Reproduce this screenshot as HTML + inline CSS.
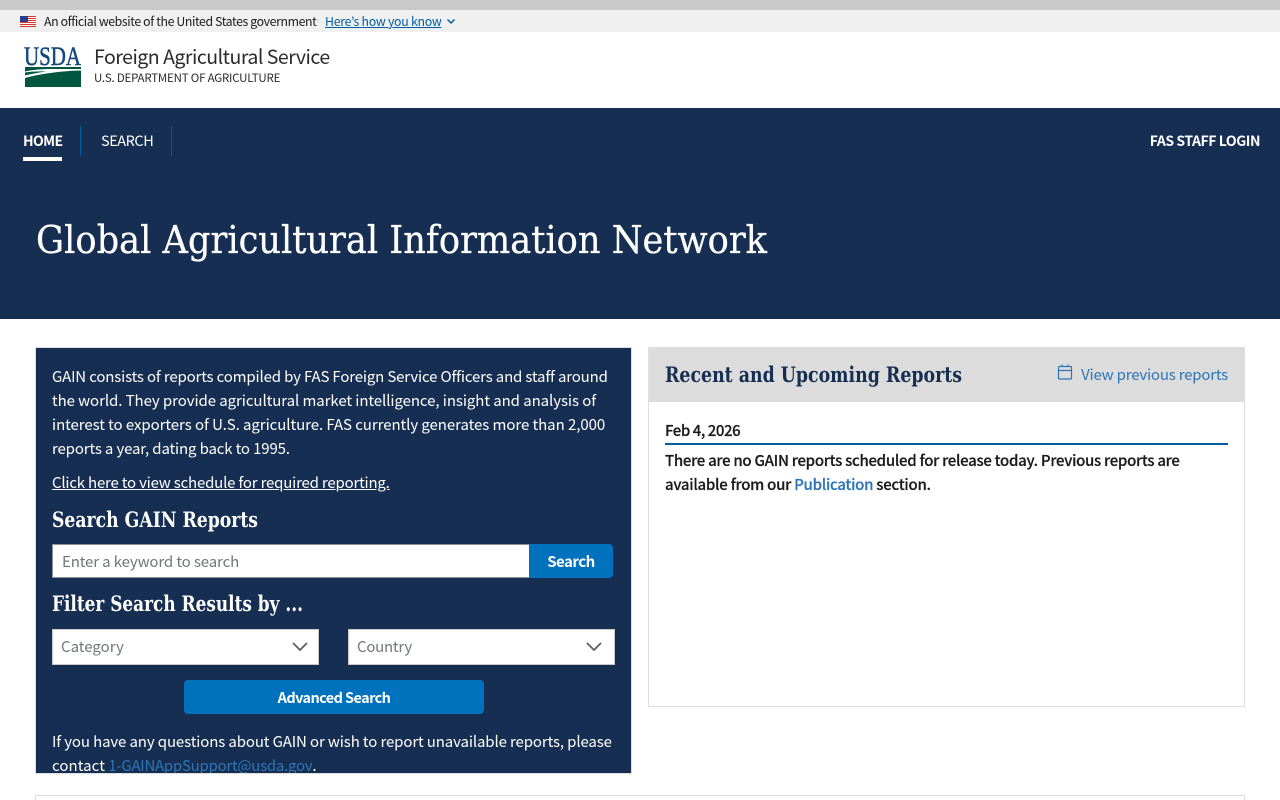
<!DOCTYPE html>
<html lang="en">
<head>
<meta charset="utf-8">
<title>Global Agricultural Information Network</title>
<style>
html,body{margin:0;padding:0;width:1280px;height:800px;overflow:hidden;background:#fff}
body{position:relative;font-family:"Noto Sans CJK JP","Liberation Sans",sans-serif;font-size:15px;color:#1b1b1b}
.a{position:absolute;white-space:nowrap;line-height:24px;letter-spacing:-.17px}
.box{position:absolute;box-sizing:border-box}
.m{font-weight:500;-webkit-text-stroke:.2px #1b1b1b}
a{color:inherit}
</style>
</head>
<body>
<div class="box" style="left:0;top:0;width:1280px;height:10px;background:#c9c9c9"></div>
<div class="box" style="left:0;top:10px;width:1280px;height:22px;background:#f0f0f0"></div>
<svg class="box" style="left:20px;top:16px" width="16" height="11" viewBox="0 0 16 11">
<rect width="16" height="11" fill="#fff"/>
<g fill="#d8392b"><rect y="0" width="16" height="1"/><rect y="2" width="16" height="1"/><rect y="4" width="16" height="1"/><rect y="6" width="16" height="1"/><rect y="8" width="16" height="1"/><rect y="10" width="16" height="1"/></g>
<rect width="8" height="6" fill="#2a3f94"/>
</svg>
<div class="a" style="left:44px;top:10px;font-size:12.3px;line-height:22px;letter-spacing:-.38px;color:#1b1b1b">An official website of the United States government</div>
<div class="a" style="left:325px;top:10px;font-size:12.3px;line-height:22px;letter-spacing:-.26px;color:#005ea2;text-decoration:underline">Here’s how you know</div>
<svg class="box" style="left:445px;top:17px" width="12" height="10" viewBox="0 0 12 10"><path d="M2.500 2.500L6 6l3.500-3.500" fill="none" stroke="#005ea2" stroke-width="1.500"/></svg>

<svg class="box" style="left:24px;top:47px" width="58" height="41" viewBox="0 0 58 41">
<text x="0" y="18" font-family="Liberation Serif,serif" font-size="26" fill="#12477f" stroke="#12477f" stroke-width=".5" textLength="57" lengthAdjust="spacingAndGlyphs">USDA</text>
<path d="M1 20H57V22H28C18 22 8 22.800 1 24.500Z" fill="#00563f"/>
<path d="M1 25.500C8 24.500 14 24.200 22 24.500 14 25.500 7 27 1 28.500Z" fill="#00563f"/>
<path d="M1 31C15 27 36 24 57 23.500V40H1Z" fill="#00563f"/>
</svg>
<div class="a" style="left:94px;top:43px;font-size:19.500px;line-height:26px;letter-spacing:-.5px;color:#2b2b2b">Foreign Agricultural Service</div>
<div class="a" style="left:94px;top:68px;font-size:11.500px;line-height:20px;letter-spacing:-.21px;color:#2b2b2b">U.S. DEPARTMENT OF AGRICULTURE</div>

<div class="box" style="left:0;top:108px;width:1280px;height:211px;background:#162e51"></div>
<div class="a" style="left:23px;top:129px;font-size:14px;font-weight:700;color:#fff;letter-spacing:-.6px">HOME</div>
<div class="box" style="left:23px;top:157px;width:39px;height:4px;background:#fff"></div>
<div class="box" style="left:80px;top:126px;width:1px;height:30px;background:#005ea2"></div>
<div class="a" style="left:101px;top:129px;font-size:14.500px;color:#fff;letter-spacing:-.45px">SEARCH</div>
<div class="box" style="left:171px;top:126px;width:1px;height:30px;background:#005ea2"></div>
<div class="a" style="right:20px;top:129px;font-size:14px;font-weight:700;color:#fff;letter-spacing:-.45px">FAS STAFF LOGIN</div>

<!-- left panel -->
<div class="box" style="left:35px;top:347px;width:597px;height:427px;background:#162e51;border:1px solid #dcdee0;overflow:hidden;color:#fff">
<div class="a" style="left:16px;top:17px;letter-spacing:-.16px">GAIN consists of reports compiled by FAS Foreign Service Officers and staff around</div>
<div class="a" style="left:16px;top:41px;letter-spacing:-.07px">the world. They provide agricultural market intelligence, insight and analysis of</div>
<div class="a" style="left:16px;top:65px;letter-spacing:-.06px">interest to exporters of U.S. agriculture. FAS currently generates more than 2,000</div>
<div class="a" style="left:16px;top:89px;letter-spacing:-.14px">reports a year, dating back to 1995.</div>
<div class="a" style="left:16px;top:123px;letter-spacing:-.2px;text-decoration:underline">Click here to view schedule for required reporting.</div>
<div class="box" style="left:16px;top:196px;width:478px;height:34px;background:#fff;border:1px solid #8d9297;border-right:0;color:#71767a;padding-left:9px;line-height:33px;letter-spacing:-.12px">Enter a keyword to search</div>
<div class="box" style="left:493px;top:196px;width:84px;height:34px;background:#0071bc;border-radius:0 4px 4px 0;text-align:center;font-weight:700;line-height:35px;letter-spacing:-.5px">Search</div>
<div class="box" style="left:16px;top:281px;width:267px;height:36px;background:#fff;border:1px solid #c9c9c9;color:#71767a;padding-left:8px;line-height:34px">Category</div>
<svg class="box" style="left:255px;top:292px" width="18" height="14" viewBox="0 0 18 14"><path d="M2 3l7 7 7-7" fill="none" stroke="#5c5f62" stroke-width="1.800"/></svg>
<div class="box" style="left:312px;top:281px;width:267px;height:36px;background:#fff;border:1px solid #c9c9c9;color:#71767a;padding-left:8px;line-height:34px;letter-spacing:-.25px">Country</div>
<svg class="box" style="left:549px;top:292px" width="18" height="14" viewBox="0 0 18 14"><path d="M2 3l7 7 7-7" fill="none" stroke="#5c5f62" stroke-width="1.800"/></svg>
<div class="box" style="left:148px;top:332px;width:300px;height:34px;background:#0071bc;border-radius:4px;text-align:center;font-weight:700;font-size:14.500px;line-height:35px;letter-spacing:-.6px">Advanced Search</div>
<div class="a" style="left:16px;top:382px;letter-spacing:-.12px">If you have any questions about GAIN or wish to report unavailable reports, please</div>
<div class="a" style="left:16px;top:406px;letter-spacing:.08px">contact <span style="color:#2e75b6;letter-spacing:-.26px">1-GAINAppSupport@usda.gov</span>.</div>
</div>

<!-- right panel -->
<div class="box" style="left:648px;top:347px;width:597px;height:360px;background:#fff;border:1px solid #dcdee0"></div>
<div class="box" style="left:649px;top:348px;width:595px;height:54px;background:#dcdcdc"></div>
<svg class="box" style="left:1057px;top:363px" width="16" height="18" viewBox="0 0 16 18"><path d="M2.500 3.500H13.500A1 1 0 0 1 14.500 4.500V15A1 1 0 0 1 13.500 16H2.500A1 1 0 0 1 1.500 15V4.500A1 1 0 0 1 2.500 3.500ZM1.500 7.500H14.500M5 1.500V4M11 1.500V4" fill="none" stroke="#2e75b6" stroke-width="1.200"/></svg>
<div class="a" style="right:52px;top:363px;color:#2e75b6;letter-spacing:-.2px">View previous reports</div>
<div class="a m" style="left:665px;top:419px;letter-spacing:-.45px">Feb 4, 2026</div>
<div class="box" style="left:665px;top:443px;width:563px;height:2px;background:#005ea2"></div>
<div class="a m" style="left:665px;top:449px;letter-spacing:-.29px">There are no GAIN reports scheduled for release today. Previous reports are</div>
<div class="a m" style="left:665px;top:473px;letter-spacing:-.27px">available from our <span style="color:#2e75b6;-webkit-text-stroke:.2px #2e75b6">Publication</span> section.</div>

<div class="box" style="left:35px;top:795px;width:1210px;height:10px;background:#fff;border:1px solid #dcdee0"></div>

<!-- serif headings -->
<svg class="box" style="left:0;top:0" width="1280" height="800" viewBox="0 0 1280 800" font-family="DejaVu Serif,Liberation Serif,serif">
<text x="36" y="253" font-size="38" fill="#fff" stroke="#fff" stroke-width=".3" textLength="731" lengthAdjust="spacingAndGlyphs">Global Agricultural Information Network</text>
<text x="52" y="527" font-size="21" font-weight="700" fill="#fff" textLength="206" lengthAdjust="spacingAndGlyphs">Search GAIN Reports</text>
<text x="52" y="611" font-size="21" font-weight="700" fill="#fff" textLength="251" lengthAdjust="spacingAndGlyphs">Filter Search Results by ...</text>
<text x="665" y="382" font-size="21" font-weight="700" fill="#162e51" textLength="297" lengthAdjust="spacingAndGlyphs">Recent and Upcoming Reports</text>
</svg>
</body>
</html>
